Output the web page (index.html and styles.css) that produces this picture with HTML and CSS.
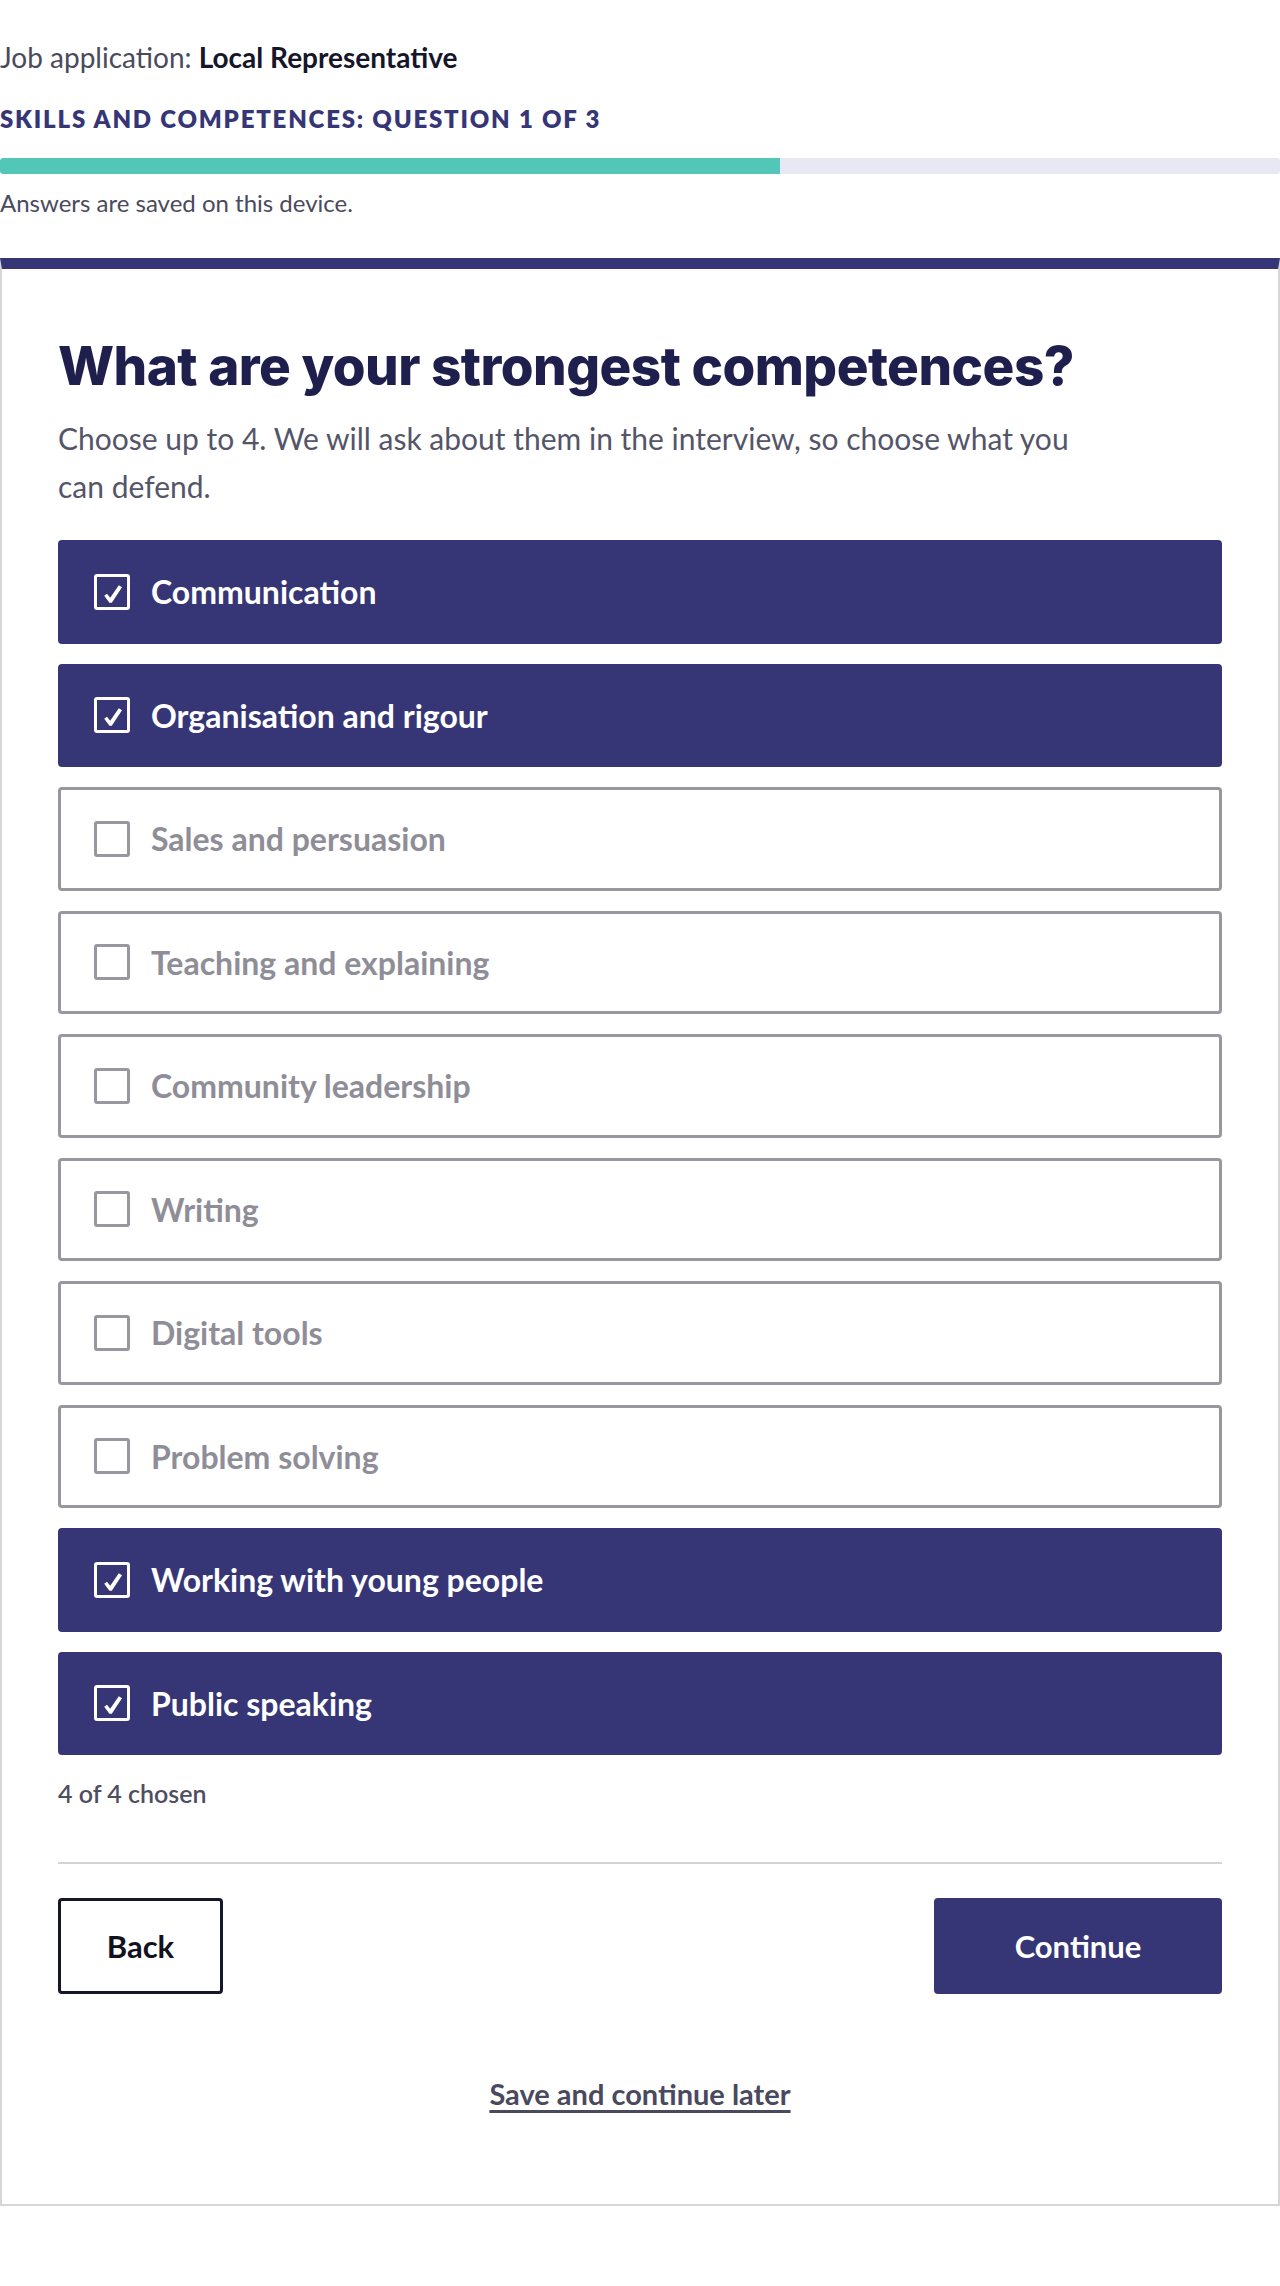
FILE: index.html
```html
<!DOCTYPE html>
<html lang="en">
<head>
<meta charset="utf-8">
<title>Job application: Local Representative</title>
<link rel="stylesheet" href="styles.css">
</head>
<body>
<div class="page">
  <header class="header">
    <p class="job">Job application: <strong>Local Representative</strong></p>
    <p class="step">Skills and competences: Question 1 of 3</p>
    <div class="progress"><div class="progress-fill" style="width: 60.9%"></div></div>
    <p class="saved">Answers are saved on this device.</p>
  </header>

  <main class="card">
    <h1 class="title">What are your strongest competences?</h1>
    <p class="intro">Choose up to 4. We will ask about them in the interview, so choose what you can defend.</p>

    <ul class="options">
      <li class="option is-checked"><span class="box"><svg viewBox="0 0 20 20" class="tick"><path d="M1.2 11.8 L4 9.8 L7.2 13.8 L15.8 1.2 L19 3.2 L8.8 18.8 L6.4 18.8 Z"/></svg></span><span class="label">Communication</span></li>
      <li class="option is-checked"><span class="box"><svg viewBox="0 0 20 20" class="tick"><path d="M1.2 11.8 L4 9.8 L7.2 13.8 L15.8 1.2 L19 3.2 L8.8 18.8 L6.4 18.8 Z"/></svg></span><span class="label">Organisation and rigour</span></li>
      <li class="option"><span class="box"></span><span class="label">Sales and persuasion</span></li>
      <li class="option"><span class="box"></span><span class="label">Teaching and explaining</span></li>
      <li class="option"><span class="box"></span><span class="label">Community leadership</span></li>
      <li class="option"><span class="box"></span><span class="label">Writing</span></li>
      <li class="option"><span class="box"></span><span class="label">Digital tools</span></li>
      <li class="option"><span class="box"></span><span class="label">Problem solving</span></li>
      <li class="option is-checked"><span class="box"><svg viewBox="0 0 20 20" class="tick"><path d="M1.2 11.8 L4 9.8 L7.2 13.8 L15.8 1.2 L19 3.2 L8.8 18.8 L6.4 18.8 Z"/></svg></span><span class="label">Working with young people</span></li>
      <li class="option is-checked"><span class="box"><svg viewBox="0 0 20 20" class="tick"><path d="M1.2 11.8 L4 9.8 L7.2 13.8 L15.8 1.2 L19 3.2 L8.8 18.8 L6.4 18.8 Z"/></svg></span><span class="label">Public speaking</span></li>
    </ul>

    <p class="count">4 of 4 chosen</p>

    <div class="actions">
      <button class="btn btn-back" type="button">Back</button>
      <button class="btn btn-continue" type="button">Continue</button>
    </div>

    <p class="later"><a href="#" class="later-link">Save and continue later</a></p>
  </main>
</div>
</body>
</html>
```

FILE: styles.css
```css
* { box-sizing: border-box; }

html, body {
  margin: 0;
  padding: 0;
  background: #ffffff;
}

body {
  font-family: "Lato", "Noto Sans", sans-serif;
  color: #4a4a5c;
}

.page {
  width: 1280px;
}

.header {
  padding-top: 41px;
}

.job {
  margin: 0;
  font-size: 28px;
  line-height: 32px;
  color: #4a4a5c;
}

.job strong {
  font-weight: 700;
  color: #16162b;
}

.step {
  margin: 30px 0 0;
  font-size: 24px;
  line-height: 32px;
  font-weight: 800;
  letter-spacing: 0.075em;
  text-transform: uppercase;
  color: #363677;
}

.progress {
  margin-top: 23px;
  height: 16px;
  background: #e8e8f5;
  border-radius: 3px;
  overflow: hidden;
}

.progress-fill {
  height: 100%;
  background: #52c6b7;
  border-radius: 3px 0 0 3px;
}

.saved {
  margin: 15px 0 0;
  font-size: 24px;
  line-height: 28px;
  color: #4a4a5c;
}

.card {
  margin-top: 41px;
  border: 2px solid #d6d6d6;
  border-top: 11px solid #363677;
  padding: 67px 56px 93px;
}

.title {
  margin: 0;
  font-family: "Inter", "Liberation Sans", sans-serif;
  font-size: 53px;
  line-height: 60px;
  font-weight: 800;
  letter-spacing: -0.01em;
  color: #1f1f4e;
}

.intro {
  margin: 18px 0 0;
  max-width: 1035px;
  font-size: 30px;
  line-height: 48px;
  color: #55556a;
}

.options {
  list-style: none;
  margin: 30px 0 0;
  padding: 0;
  display: flex;
  flex-direction: column;
  gap: 20px;
}

.option {
  height: 103.5px;
  display: flex;
  align-items: center;
  gap: 21px;
  padding-left: 33px;
  border: 3px solid #98979f;
  border-radius: 4px;
  background: #ffffff;
}

.option.is-checked {
  background: #363677;
  border-color: #363677;
}

.box {
  width: 36px;
  height: 36px;
  flex: none;
  border: 3px solid #98979f;
  border-radius: 3px;
  display: flex;
  align-items: flex-end;
  justify-content: center;
  padding-bottom: 3px;
  padding-left: 2px;
}

.is-checked .box {
  border-color: #ffffff;
}

.tick {
  width: 20px;
  height: 20px;
  fill: #ffffff;
}

.label {
  font-size: 32px;
  font-weight: 700;
  color: #8f8e98;
}

.is-checked .label {
  color: #ffffff;
}

.count {
  margin: 23px 0 0;
  font-size: 25px;
  line-height: 30px;
  font-weight: 600;
  color: #4f4e60;
}

.actions {
  margin-top: 54px;
  padding-top: 34px;
  border-top: 2px solid #d4d4d4;
  display: flex;
  justify-content: space-between;
}

.btn {
  height: 96px;
  font-family: "Lato", "Noto Sans", sans-serif;
  font-size: 31px;
  font-weight: 700;
  border-radius: 4px;
  cursor: pointer;
}

.btn-back {
  width: 165px;
  background: #ffffff;
  color: #111120;
  border: 3px solid #16162b;
}

.btn-continue {
  width: 288px;
  background: #363677;
  color: #ffffff;
  border: none;
}

.later {
  margin: 83px 0 0;
  text-align: center;
  font-size: 29px;
  line-height: 34px;
  font-weight: 700;
}

.later-link {
  color: #4a4a5e;
  text-decoration: underline;
  text-decoration-thickness: 3px;
  text-underline-offset: 5px;
}
```
